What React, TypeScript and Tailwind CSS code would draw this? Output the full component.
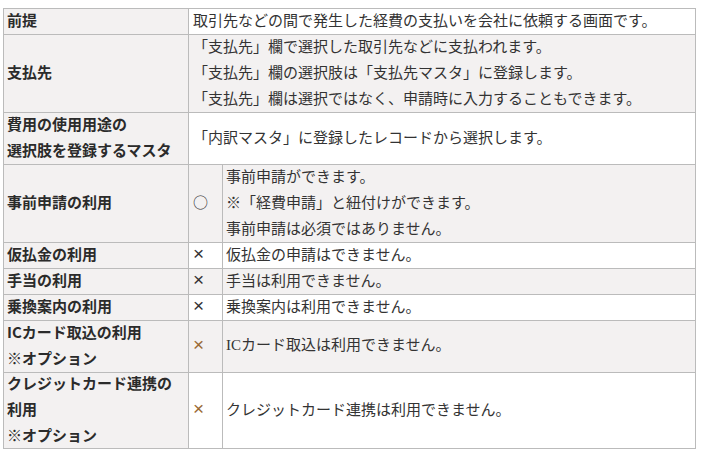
const font = { fontFamily: '"Noto Sans CJK JP", "Noto Sans", sans-serif' };

type Row = {
  head: string[];
  mark?: string;
  markClass?: string;
  lines: React.ReactNode[];
  gray: boolean;
};

const rows: Row[] = [
  { head: ["前提"], lines: ["取引先などの間で発生した経費の支払いを会社に依頼する画面です。"], gray: false },
  {
    head: ["支払先"],
    lines: [
      "「支払先」欄で選択した取引先などに支払われます。",
      "「支払先」欄の選択肢は「支払先マスタ」に登録します。",
      "「支払先」欄は選択ではなく、申請時に入力することもできます。",
    ],
    gray: true,
  },
  { head: ["費用の使用用途の", "選択肢を登録するマスタ"], lines: ["「内訳マスタ」に登録したレコードから選択します。"], gray: false },
  {
    head: ["事前申請の利用"],
    mark: "○",
    lines: ["事前申請ができます。", "※「経費申請」と紐付けができます。", "事前申請は必須ではありません。"],
    gray: true,
  },
  { head: ["仮払金の利用"], mark: "×", lines: ["仮払金の申請はできません。"], gray: false },
  { head: ["手当の利用"], mark: "×", lines: ["手当は利用できません。"], gray: true },
  { head: ["乗換案内の利用"], mark: "×", lines: ["乗換案内は利用できません。"], gray: false },
  {
    head: ["ICカード取込の利用", "※オプション"],
    mark: "×",
    markClass: "text-[#9a6a34]",
    lines: [
      <>
        <span style={{ fontFamily: '"Liberation Serif", serif' }}>IC</span>カード取込は利用できません。
      </>,
    ],
    gray: true,
  },
  {
    head: ["クレジットカード連携の", "利用", "※オプション"],
    mark: "×",
    markClass: "text-[#9a6a34]",
    lines: ["クレジットカード連携は利用できません。"],
    gray: false,
  },
];

const cell = "border-r border-b border-[#bbbbbb] flex flex-col justify-center pb-[4px] leading-[26px]";

export default function App() {
  return (
    <div className="w-[703px] h-[457px] bg-white pt-[8px] pl-[3px] text-[15px] text-[#333]" style={font}>
      <div className="grid w-[693px] grid-cols-[185px_34px_473px] grid-rows-[26px_78px_52px_78px_26px_26px_26px_52px_76px] border-l border-t border-[#bbbbbb]">
        {rows.map((r, i) => {
          const bg = r.gray ? "bg-[#f3f1f1]" : "bg-white";
          return [
            <div key={`h${i}`} className={`${cell} bg-[#f3f1f1] pl-[3px] font-bold text-[#2b2b2b]`}>
              {r.head.map((h) => (
                <div key={h}>{h}</div>
              ))}
            </div>,
            r.mark ? (
              <div key={`m${i}`} className={`${cell} ${bg} pl-[4px] ${r.markClass ?? ""}`}>
                <span
                  className={r.mark === "×" ? "text-[19px] leading-[26px]" : "text-[15px]"}
                  style={r.mark === "×" ? { fontFamily: '"Liberation Sans", sans-serif' } : undefined}
                >
                  {r.mark}
                </span>
              </div>
            ) : null,
            <div key={`c${i}`} className={`${cell} ${bg} ${r.mark ? "pl-[3px]" : "col-span-2 pl-[4px]"}`}>
              {r.lines.map((l, j) => (
                <div key={j}>{l}</div>
              ))}
            </div>,
          ];
        })}
      </div>
    </div>
  );
}
